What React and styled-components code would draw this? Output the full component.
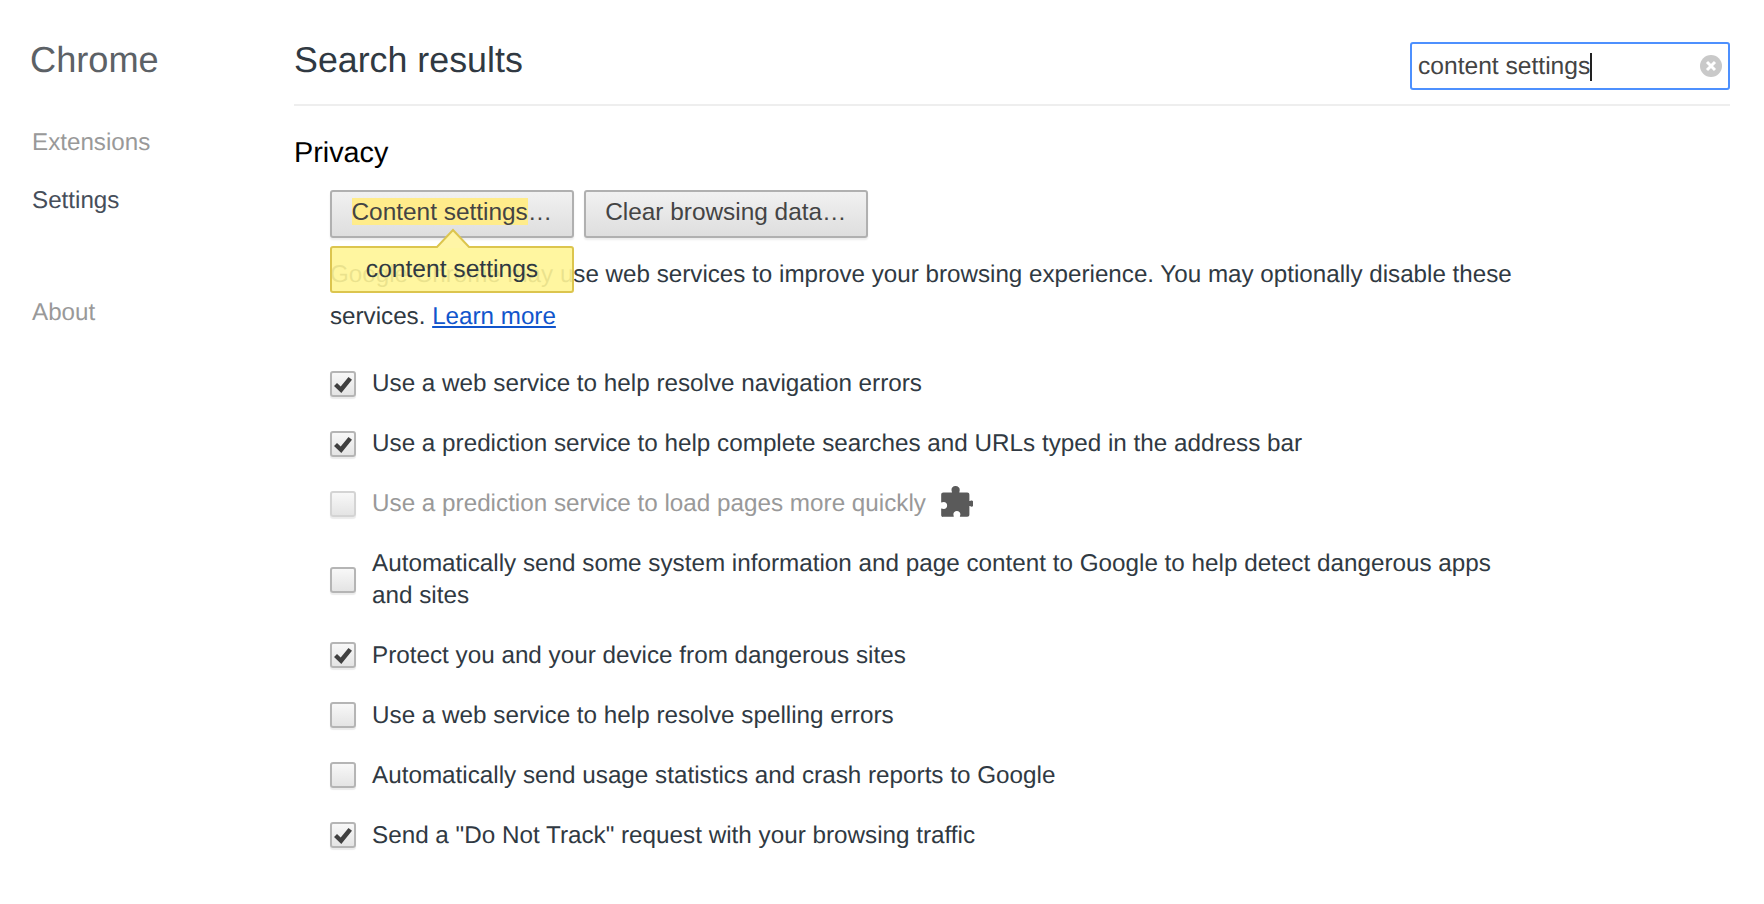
import * as React from 'react';
import styled, { createGlobalStyle } from 'styled-components';

const GlobalStyle = createGlobalStyle`
  html, body {
    margin: 0;
    padding: 0;
    background: #fff;
    font-family: 'Liberation Sans', Arial, sans-serif;
    color: #303942;
    text-rendering: geometricPrecision;
  }
`;

const options = [
  { label: 'Use a web service to help resolve navigation errors', checked: true },
  { label: 'Use a prediction service to help complete searches and URLs typed in the address bar', checked: true },
  { label: 'Use a prediction service to load pages more quickly', disabled: true, extension: true },
  { label: 'Automatically send some system information and page content to Google to help detect dangerous apps and sites' },
  { label: 'Protect you and your device from dangerous sites', checked: true },
  { label: 'Use a web service to help resolve spelling errors' },
  { label: 'Automatically send usage statistics and crash reports to Google' },
  { label: 'Send a "Do Not Track" request with your browsing traffic', checked: true },
];

const PuzzleIcon = () => (
  <Puzzle width="35" height="35" viewBox="0 0 33 33" aria-hidden="true">
    <path
      fill="#5a5a5a"
      d="M16.500 1c2.600 0 4 1.700 4 3.600 0 .9-.4 1.500-.4 2.400h7.400c1.300 0 2.100.8 2.100 2.100v6.100c.8 0 1.300-.5 2.200-.5 1.400 0 1.700 1.300 1.700 2.800s-.4 2.900-1.800 2.900c-.9 0-1.300-.6-2.100-.6v8.100c0 1.300-.8 2.100-2.100 2.100h-6.900c0-.9.5-1.500.5-2.400 0-1.800-1.400-3.100-3.300-3.100s-3.300 1.300-3.300 3.100c0 .9.400 1.500.4 2.400H5.100C3.800 30.500 3 29.700 3 28.400v-6.300c.9 0 1.500.5 2.400.5 1.900 0 3.200-1.400 3.200-3.300S7.300 16 5.400 16c-.9 0-1.500.5-2.400.5V9.100C3 7.800 3.800 7 5.100 7h8.100c0-.9-.5-1.500-.5-2.400C12.700 2.700 14 1 16.500 1z"
    />
  </Puzzle>
);

const CheckMark = () => (
  <svg width="22" height="22" viewBox="0 0 22 22" aria-hidden="true">
    <path fill="#404040" d="M2 12l3-3 3.700 3.600L16.500 3 20 5.800 9.300 19z" />
  </svg>
);

const ClearIcon = () => (
  <svg width="22" height="22" viewBox="0 0 22 22" aria-hidden="true">
    <circle cx="11" cy="11" r="11" fill="#c9c9c9" />
    <path d="M7 7l8 8M15 7l-8 8" stroke="#fff" strokeWidth="3" />
  </svg>
);

export default function App() {
  return (
    <Page>
      <GlobalStyle />
      <Sidebar>
        <Brand>Chrome</Brand>
        <NavItem>Extensions</NavItem>
        <NavItem $active>Settings</NavItem>
        <NavItem $separated>About</NavItem>
      </Sidebar>
      <Main>
        <Header>
          <Title>Search results</Title>
          <SearchBox>
            <SearchText>content settings</SearchText>
            <Caret />
            <ClearIcon />
          </SearchBox>
        </Header>
        <SectionTitle>Privacy</SectionTitle>
        <Section>
          <Buttons>
            <Button>
              <Highlight>Content settings</Highlight>…
            </Button>
            <Button>Clear browsing data…</Button>
          </Buttons>
          <Bubble>
            <BubbleArrow width="36" height="20" viewBox="0 0 36 20" aria-hidden="true">
              <polygon points="0,20 18,1.500 36,20" fill="#fff5a6" />
              <polyline points="0,19 2,19 18,2 34,19 36,19" fill="none" stroke="#dcc54e" strokeWidth="2" />
            </BubbleArrow>
            content settings
          </Bubble>
          <Intro>
            Google Chrome may use web services to improve your browsing experience. You may optionally disable these
            services. <Link href="#">Learn more</Link>
          </Intro>
          <OptionList>
            {options.map((option) => (
              <Option key={option.label} $disabled={option.disabled}>
                <CheckBox $disabled={option.disabled}>{option.checked && <CheckMark />}</CheckBox>
                <OptionLabel>{option.label}</OptionLabel>
                {option.extension && <PuzzleIcon />}
              </Option>
            ))}
          </OptionList>
        </Section>
      </Main>
    </Page>
  );
}

const Page = styled.div`
  display: flex;
  width: 1764px;
  height: 904px;
  overflow: hidden;
  box-sizing: border-box;
`;

const Sidebar = styled.nav`
  flex: 0 0 294px;
  box-sizing: border-box;
  padding: 37px 0 0 32px;
`;

const Brand = styled.h1`
  margin: 0 0 46px -2px;
  font-size: 36.200px;
  line-height: 45px;
  font-weight: 400;
  color: #5c6166;
`;

const NavItem = styled.div`
  height: 30px;
  margin-bottom: 28px;
  margin-top: ${(props) => (props.$separated ? '82px' : '0')};
  font-size: 24.200px;
  line-height: 30px;
  color: ${(props) => (props.$active ? '#464e5a' : '#999')};
`;

const Main = styled.main`
  flex: 0 0 1436px;
  min-width: 0;
`;

const Header = styled.header`
  display: flex;
  justify-content: space-between;
  align-items: flex-end;
  height: 106px;
  box-sizing: border-box;
  padding-bottom: 14px;
  border-bottom: 2px solid #eee;
`;

const Title = styled.h2`
  margin: 0 0 7px;
  font-size: 35.800px;
  line-height: 45px;
  font-weight: 400;
  color: #303942;
`;

const SearchBox = styled.div`
  display: flex;
  align-items: center;
  width: 320px;
  height: 48px;
  box-sizing: border-box;
  padding: 2px 6px 0 6px;
  border: 2px solid #4d90fe;
  border-radius: 3px;
  font-size: 24.600px;
  color: #444;

  svg {
    margin-top: -2px;
  }
`;

const SearchText = styled.span`
  white-space: nowrap;
`;

const Caret = styled.span`
  width: 2px;
  height: 28px;
  margin-right: auto;
  background: #222;
`;

const SectionTitle = styled.h3`
  margin: 30px 0 0;
  font-size: 28.800px;
  line-height: 34px;
  font-weight: 400;
  color: #000;
`;

const Section = styled.section`
  position: relative;
  padding: 20px 0 0 36px;
  font-size: 24.250px;
`;

const Buttons = styled.div`
  display: flex;
  gap: 10px;
`;

const Button = styled.button`
  height: 48px;
  padding: 0 19.500px 4px;
  box-sizing: border-box;
  border: 2px solid #b0b0b0;
  border-radius: 3px;
  background: linear-gradient(#f1f1f1, #dedede);
  box-shadow: 0 2px 2px rgba(0, 0, 0, 0.08);
  font: inherit;
  font-size: 24.400px;
  color: #444;
`;

const Highlight = styled.span`
  background: #ffec8b;
`;

const Bubble = styled.div`
  position: absolute;
  left: 36px;
  top: 76px;
  width: 244px;
  height: 47px;
  box-sizing: border-box;
  border: 2px solid #dcc54e;
  border-radius: 3px;
  background: rgba(255, 245, 150, 0.9);
  text-align: center;
  font-size: 24.600px;
  line-height: 44px;
  color: #303942;
`;

const BubbleArrow = styled.svg`
  position: absolute;
  left: 103px;
  top: -20px;
`;

const Intro = styled.p`
  max-width: 1240px;
  margin: 16px 0 0;
  font-size: 24.200px;
  line-height: 42px;
  color: #303942;
`;

const Link = styled.a`
  color: #15c;
  text-decoration: underline;
`;

const OptionList = styled.div`
  display: flex;
  flex-direction: column;
  gap: 28.500px;
  margin-top: 30px;
  max-width: 1195px;
`;

const Option = styled.div`
  display: flex;
  align-items: center;
  min-height: 31.500px;
  line-height: 31.500px;
  color: ${(props) => (props.$disabled ? '#999' : '#303942')};
`;

const CheckBox = styled.span`
  flex: 0 0 26px;
  height: 26px;
  box-sizing: border-box;
  margin-right: 16px;
  border: 2px solid ${(props) => (props.$disabled ? '#d4d4d4' : '#b5b5b5')};
  border-radius: 3px;
  background: linear-gradient(#f8f8f8, #e4e4e4);
  box-shadow: 0 2px 1px rgba(0, 0, 0, 0.08);
`;

const OptionLabel = styled.span`
  margin-right: 12px;
`;

const Puzzle = styled.svg`
  margin-top: -3.500px;
`;
